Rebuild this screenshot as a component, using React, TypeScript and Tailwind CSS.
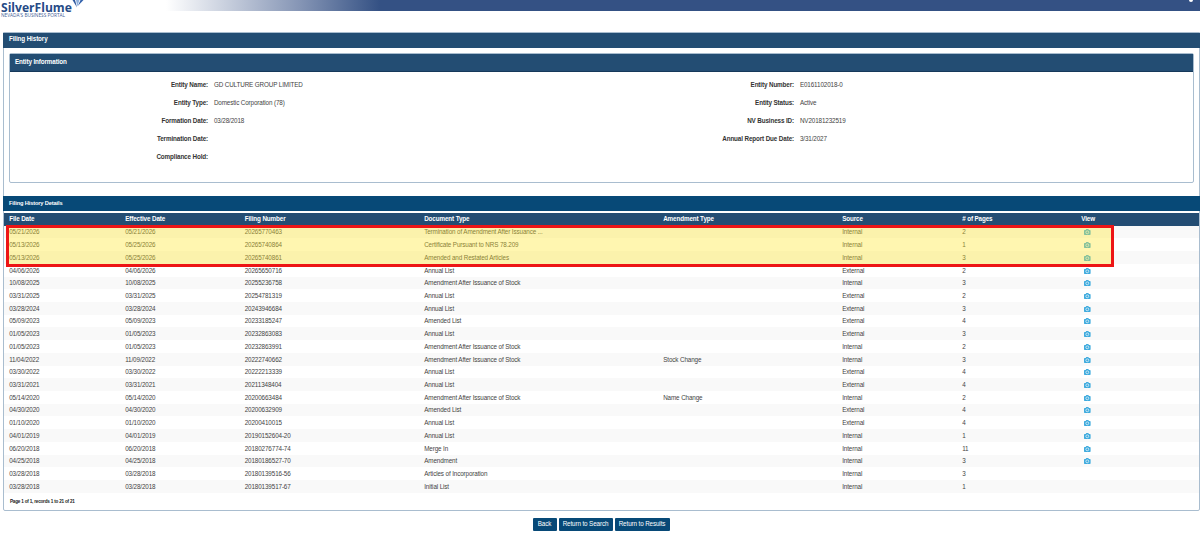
interface Field {
  label: string;
  value: string;
}

interface Filing {
  fileDate: string;
  effectiveDate: string;
  number: string;
  document: string;
  amendment?: string;
  source: string;
  pages: number;
  image?: boolean;
}

const leftFields: Field[] = [
  { label: "Entity Name:", value: "GD CULTURE GROUP LIMITED" },
  { label: "Entity Type:", value: "Domestic Corporation (78)" },
  { label: "Formation Date:", value: "03/28/2018" },
  { label: "Termination Date:", value: "" },
  { label: "Compliance Hold:", value: "" },
];

const rightFields: Field[] = [
  { label: "Entity Number:", value: "E0161102018-0" },
  { label: "Entity Status:", value: "Active" },
  { label: "NV Business ID:", value: "NV20181232519" },
  { label: "Annual Report Due Date:", value: "3/31/2027" },
];

const columns = [
  "File Date",
  "Effective Date",
  "Filing Number",
  "Document Type",
  "Amendment Type",
  "Source",
  "# of Pages",
  "View",
];

const filings: Filing[] = [
  { fileDate: "05/21/2026", effectiveDate: "05/21/2026", number: "20265770463", document: "Termination of Amendment After Issuance ...", source: "Internal", pages: 2, image: true },
  { fileDate: "05/13/2026", effectiveDate: "05/25/2026", number: "20265740864", document: "Certificate Pursuant to NRS 78.209", source: "Internal", pages: 1, image: true },
  { fileDate: "05/13/2026", effectiveDate: "05/25/2026", number: "20265740861", document: "Amended and Restated Articles", source: "Internal", pages: 3, image: true },
  { fileDate: "04/06/2026", effectiveDate: "04/06/2026", number: "20265650716", document: "Annual List", source: "External", pages: 2, image: true },
  { fileDate: "10/08/2025", effectiveDate: "10/08/2025", number: "20255236758", document: "Amendment After Issuance of Stock", source: "Internal", pages: 3, image: true },
  { fileDate: "03/31/2025", effectiveDate: "03/31/2025", number: "20254781319", document: "Annual List", source: "External", pages: 2, image: true },
  { fileDate: "03/28/2024", effectiveDate: "03/28/2024", number: "20243946684", document: "Annual List", source: "External", pages: 3, image: true },
  { fileDate: "05/09/2023", effectiveDate: "05/09/2023", number: "20233185247", document: "Amended List", source: "External", pages: 4, image: true },
  { fileDate: "01/05/2023", effectiveDate: "01/05/2023", number: "20232863083", document: "Annual List", source: "External", pages: 3, image: true },
  { fileDate: "01/05/2023", effectiveDate: "01/05/2023", number: "20232863991", document: "Amendment After Issuance of Stock", source: "Internal", pages: 2, image: true },
  { fileDate: "11/04/2022", effectiveDate: "11/09/2022", number: "20222740662", document: "Amendment After Issuance of Stock", amendment: "Stock Change", source: "Internal", pages: 3, image: true },
  { fileDate: "03/30/2022", effectiveDate: "03/30/2022", number: "20222213339", document: "Annual List", source: "External", pages: 4, image: true },
  { fileDate: "03/31/2021", effectiveDate: "03/31/2021", number: "20211348404", document: "Annual List", source: "External", pages: 4, image: true },
  { fileDate: "05/14/2020", effectiveDate: "05/14/2020", number: "20200663484", document: "Amendment After Issuance of Stock", amendment: "Name Change", source: "Internal", pages: 2, image: true },
  { fileDate: "04/30/2020", effectiveDate: "04/30/2020", number: "20200632909", document: "Amended List", source: "External", pages: 4, image: true },
  { fileDate: "01/10/2020", effectiveDate: "01/10/2020", number: "20200410015", document: "Annual List", source: "External", pages: 4, image: true },
  { fileDate: "04/01/2019", effectiveDate: "04/01/2019", number: "20190152604-20", document: "Annual List", source: "Internal", pages: 1, image: true },
  { fileDate: "06/20/2018", effectiveDate: "06/20/2018", number: "20180276774-74", document: "Merge In", source: "Internal", pages: 11, image: true },
  { fileDate: "04/25/2018", effectiveDate: "04/25/2018", number: "20180186527-70", document: "Amendment", source: "Internal", pages: 3, image: true },
  { fileDate: "03/28/2018", effectiveDate: "03/28/2018", number: "20180139516-56", document: "Articles of Incorporation", source: "Internal", pages: 3 },
  { fileDate: "03/28/2018", effectiveDate: "03/28/2018", number: "20180139517-67", document: "Initial List", source: "Internal", pages: 1 },
];

const gridCols =
  "grid grid-cols-[116px_119.5px_179.5px_239px_179px_120px_119px_1fr] items-center pl-[5.2px]";

const CameraIcon = () => (
  <svg className="ml-[3px] h-[6px] w-[6.6px]" viewBox="0 0 20 18">
    <path
      d="M2 3h3l2-3h6l2 3h3a2 2 0 0 1 2 2v11a2 2 0 0 1-2 2H2a2 2 0 0 1-2-2V5a2 2 0 0 1 2-2z"
      fill="#3fabde"
    />
    <circle cx="10" cy="10" r="4.4" fill="#3fabde" stroke="#fff" strokeWidth="2" />
  </svg>
);

const Header = () => (
  <header className="flex h-8 items-start">
    <div className="relative w-[166px] shrink-0">
      <div className="h-[13px] pl-px font-['Open_Sans',sans-serif] text-[12.1px] leading-[15px] font-bold text-[#264b86]">
        SilverFlume
      </div>
      <div className="pl-px font-['Open_Sans',sans-serif] text-[4.75px] leading-[5.6px] font-medium text-[#3f6096]">
        NEVADA&apos;S BUSINESS PORTAL
      </div>
      <svg className="absolute top-0 left-[72px] h-2 w-3" viewBox="0 0 12 8">
        <path d="M0.5 0 3 0 5 7.5Z" fill="#2f5aa0" />
        <path d="M4 0 7.5 0 5.2 6.5Z" fill="#8fb0dc" />
        <path d="M8.5 0 11.5 0 5.8 6Z" fill="#3564ad" />
      </svg>
    </div>
    <div className="relative h-[11px] flex-1 overflow-hidden bg-[linear-gradient(to_right,#ffffff_0,#8595b5_134px,#345184_214px,#345184_100%)]">
      <span className="absolute -top-[3px] right-[7px] h-[5px] w-[4px] rounded-full bg-white" />
    </div>
  </header>
);

const FieldList = ({ fields }: { fields: Field[] }) => (
  <dl className="w-[586px]">
    {fields.map((field) => (
      <div key={field.label} className="flex h-[18.1px] items-center">
        <dt className="w-[198px] text-right font-bold text-[#333]">{field.label}</dt>
        <dd className="pl-[5.9px] text-[#444]">{field.value}</dd>
      </div>
    ))}
  </dl>
);

const EntityInformation = () => (
  <section className="mx-[5px] mt-[5px] h-[130px] rounded-[2px] border border-[#a9bdcf]">
    <h2 className="flex h-[18px] items-center border-b border-[#16395a] bg-[#234d73] pl-[5px] pb-px font-bold text-white">
      Entity Information
    </h2>
    <div className="flex pt-[4px]">
      <FieldList fields={leftFields} />
      <FieldList fields={rightFields} />
    </div>
  </section>
);

const FilingTable = () => (
  <div className="relative">
    <div className={`${gridCols} h-[12.7px] bg-[#234d73] font-bold text-white`}>
      {columns.map((column) => (
        <span key={column}>{column}</span>
      ))}
    </div>
    {filings.map((filing) => (
      <div
        key={filing.number}
        className={`${gridCols} h-[12.72px] pt-[0.6px] text-[#444] even:bg-[#f9f9f9]`}
      >
        <span>{filing.fileDate}</span>
        <span>{filing.effectiveDate}</span>
        <span>{filing.number}</span>
        <span>{filing.document}</span>
        <span>{filing.amendment}</span>
        <span>{filing.source}</span>
        <span>{filing.pages}</span>
        <span>{filing.image && <CameraIcon />}</span>
      </div>
    ))}
    {/* marker over the three latest filings */}
    <div className="absolute top-[12px] left-[2px] h-[42px] w-[1108px] border-3 border-[#ed1515] bg-[rgba(255,230,40,0.37)]" />
  </div>
);

const App = () => {
  return (
    <div className="h-[534px] overflow-hidden bg-white font-['Liberation_Sans',Arial,sans-serif] text-[6.3px] leading-[8px] tracking-[-0.12px] whitespace-nowrap">
      <div className="tracking-normal">
        <Header />
      </div>
      <main className="ml-[3px] h-[479px] rounded-b-[2px] border border-[#a9bdcf]">
        <h1 className="-mx-px flex h-[15px] items-center bg-[#234d73] pl-[6px] pb-[4px] font-bold text-white">
          Filing History
        </h1>
        <EntityInformation />
        <h2 className="-mx-px mt-[13px] mb-[2px] flex h-[15px] items-center bg-[#074977] pl-[6px] pb-px text-[5.7px] font-bold tracking-[-0.14px] text-white">
          Filing History Details
        </h2>
        <FilingTable />
        <p className="pt-[5px] pl-[6px] text-[4.6px] font-bold tracking-[-0.2px] text-[#222]">
          Page 1 of 1, records 1 to 21 of 21
        </p>
      </main>
      <div className="mt-[7px] ml-[2px] flex justify-center gap-[2px] text-white">
        <button className="h-[12.5px] w-[24px] rounded-[1px] bg-[#074977]">Back</button>
        <button className="h-[12.5px] w-[54px] rounded-[1px] bg-[#074977]">Return to Search</button>
        <button className="h-[12.5px] w-[55px] rounded-[1px] bg-[#074977]">Return to Results</button>
      </div>
    </div>
  );
};

export default App;
